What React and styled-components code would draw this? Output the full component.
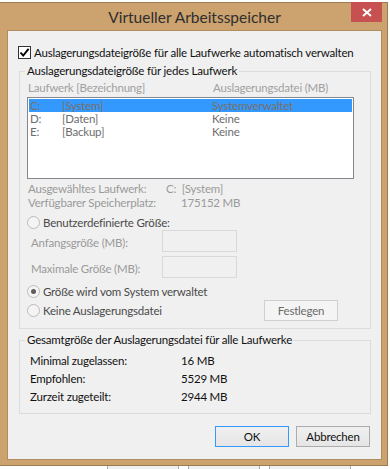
import styled, { createGlobalStyle } from "styled-components";

const GlobalStyle = createGlobalStyle`
  html, body {
    margin: 0;
    padding: 0;
    background: #ffffff;
  }
  body {
    font-family: Lato, "Liberation Sans", sans-serif;
    font-size: 11.5px;
    letter-spacing: -0.2px;
    color: #000;
  }
  * {
    box-sizing: border-box;
  }
`;

const drives = [
  { letter: "C:", name: "[System]", size: "Systemverwaltet", selected: true },
  { letter: "D:", name: "[Daten]", size: "Keine" },
  { letter: "E:", name: "[Backup]", size: "Keine" },
];

const totals = [
  { label: "Minimal zugelassen:", value: "16 MB" },
  { label: "Empfohlen:", value: "5529 MB" },
  { label: "Zurzeit zugeteilt:", value: "2944 MB" },
];

export default function App() {
  return (
    <>
      <GlobalStyle />
      <Desktop>
        <Window>
          <TitleBar>
            <span />
            <Title>Virtueller Arbeitsspeicher</Title>
            <CloseButton aria-label="Schließen">
              <svg width="10" height="9" viewBox="0 0 10 9">
                <path d="M1 1 L9 8 M9 1 L1 8" stroke="#fff" strokeWidth="2" fill="none" />
              </svg>
            </CloseButton>
          </TitleBar>

          <Client>
            <CheckRow>
              <CheckBox>
                <svg width="11" height="11" viewBox="0 0 11 11">
                  <path d="M1.5 5.5 L4.2 8.6 L9.6 1.8" stroke="#000" strokeWidth="1.9" fill="none" />
                </svg>
              </CheckBox>
              <span>Auslagerungsdateigröße für alle Laufwerke automatisch verwalten</span>
            </CheckRow>

            <Group $padBottom={7}>
              <Legend>Auslagerungsdateigröße für jedes Laufwerk</Legend>
              <ColumnHeads>
                <span>Laufwerk [Bezeichnung]</span>
                <span>Auslagerungsdatei (MB)</span>
              </ColumnHeads>
              <ListBox>
                {drives.map((d) => (
                  <ListRow key={d.letter} $selected={d.selected}>
                    <span>{d.letter}</span>
                    <span>{d.name}</span>
                    <span>{d.size}</span>
                  </ListRow>
                ))}
              </ListBox>

              <InfoRow $labelWidth={138} $top={3}>
                <span>Ausgewähltes Laufwerk:</span>
                <span>C:&nbsp;&nbsp;[System]</span>
              </InfoRow>
              <InfoRow $labelWidth={153}>
                <span>Verfügbarer Speicherplatz:</span>
                <span>175152 MB</span>
              </InfoRow>

              <RadioRow $top={5}>
                <Radio />
                <span>Benutzerdefinierte Größe:</span>
              </RadioRow>
              <SizeRow $top={1}>
                <SizeLabel>Anfangsgröße (MB):</SizeLabel>
                <SizeInput disabled />
              </SizeRow>
              <SizeRow $top={4}>
                <SizeLabel>Maximale Größe (MB):</SizeLabel>
                <SizeInput disabled />
              </SizeRow>
              <RadioRow $top={6}>
                <Radio $checked />
                <span>Größe wird vom System verwaltet</span>
              </RadioRow>
              <RadioRow $top={2} $height={21}>
                <Radio />
                <span>Keine Auslagerungsdatei</span>
                <PushButton $disabled $push>Festlegen</PushButton>
              </RadioRow>
            </Group>

            <Group $top={4} $padBottom={7}>
              <Legend>Gesamtgröße der Auslagerungsdatei für alle Laufwerke</Legend>
              <Totals>
                {totals.map((t) => (
                  <TotalRow key={t.label}>
                    <span>{t.label}</span>
                    <span>{t.value}</span>
                  </TotalRow>
                ))}
              </Totals>
            </Group>

            <ButtonRow>
              <PushButton $default>OK</PushButton>
              <PushButton>Abbrechen</PushButton>
            </ButtonRow>
          </Client>
        </Window>

        <ParentRow>
          <ParentButton $width={72}>OK</ParentButton>
          <ParentButton $width={72}>Abbrechen</ParentButton>
          <ParentButton $width={82}>Übernehmen</ParentButton>
        </ParentRow>
      </Desktop>
    </>
  );
}

const Desktop = styled.div`
  width: 390px;
  height: 469px;
  overflow: hidden;
  background: #ffffff;
  padding-top: 2px;
`;

const Window = styled.div`
  width: 388px;
  background: #cca26f;
  border: 1px solid #9c7b52;
  border-left: none;
  padding: 0 5px 5px 7px;
`;

const TitleBar = styled.div`
  display: grid;
  grid-template-columns: 1fr auto 1fr;
  height: 27px;
`;

const Title = styled.div`
  align-self: center;
  font-size: 15.5px;
  letter-spacing: 0;
  color: #2e2e2e;
  white-space: nowrap;
  padding-top: 1px;
`;

const CloseButton = styled.div`
  justify-self: end;
  align-self: start;
  margin-top: -1px;
  width: 31px;
  height: 20px;
  background: #c75050;
  display: flex;
  align-items: center;
  justify-content: center;
`;

const Client = styled.div`
  height: 430px;
  background: #f0f0f0;
  border: 1px solid #b08c5f;
  padding: 0 10px 0 11px;
  display: flex;
  flex-direction: column;
`;

const CheckRow = styled.div`
  display: flex;
  align-items: center;
  gap: 3px;
  height: 13px;
  margin: 15px 0 0 -1px;
  white-space: nowrap;
  color: #111;
`;

const CheckBox = styled.span`
  width: 13px;
  height: 13px;
  border: 1px solid #333333;
  background: #ffffff;
  display: flex;
  align-items: center;
  justify-content: center;
  flex: none;
`;

const Group = styled.fieldset`
  margin: ${(p) => p.$top || 5}px 0 0 0;
  padding: 3px 0 ${(p) => p.$padBottom}px 7px;
  border: 1px solid #dcdcdc;
  min-width: 0;
`;

const Legend = styled.legend`
  padding: 0 2px;
  margin-left: -2px;
  line-height: 14px;
  color: #111;
  white-space: nowrap;
`;

const ColumnHeads = styled.div`
  display: grid;
  grid-template-columns: 185px 1fr;
  height: 14px;
  line-height: 14px;
  padding-left: 1px;
  color: #a0a0a0;
  white-space: nowrap;
`;

const ListBox = styled.div`
  margin-top: 2px;
  width: 327px;
  height: 82px;
  border: 1px solid #828790;
  background: #ffffff;
  padding: 1px;
`;

const ListRow = styled.div`
  display: grid;
  grid-template-columns: 32px 150px 1fr;
  height: 13px;
  line-height: 13px;
  padding-left: 1px;
  white-space: nowrap;
  overflow: hidden;
  color: ${(p) => (p.$selected ? "#7a7066" : "#6d6d6d")};
  background: ${(p) => (p.$selected ? "#3399ff" : "transparent")};
`;

const InfoRow = styled.div`
  display: grid;
  grid-template-columns: ${(p) => p.$labelWidth}px 1fr;
  margin: ${(p) => p.$top || 0}px 0 0 1px;
  height: 14px;
  line-height: 14px;
  color: #9a9a9a;
  white-space: nowrap;
`;

const RadioRow = styled.div`
  display: flex;
  align-items: center;
  gap: 3px;
  margin-top: ${(p) => p.$top || 0}px;
  height: ${(p) => p.$height || 14}px;
  color: #4a4a4a;
  white-space: nowrap;
`;

const Radio = styled.span`
  width: 13px;
  height: 13px;
  border-radius: 50%;
  border: 1px solid #bcbcbc;
  background: #f4f4f4;
  display: flex;
  align-items: center;
  justify-content: center;
  flex: none;

  &::after {
    content: "";
    width: 5px;
    height: 5px;
    border-radius: 50%;
    background: ${(p) => (p.$checked ? "#5c5c5c" : "transparent")};
  }
`;

const SizeRow = styled.div`
  display: flex;
  align-items: center;
  margin-top: ${(p) => p.$top || 0}px;
  height: 22px;
  padding-left: 4px;
  color: #9a9a9a;
`;

const SizeLabel = styled.span`
  width: 131px;
  padding-top: 3px;
  white-space: nowrap;
`;

const SizeInput = styled.input`
  width: 75px;
  height: 22px;
  margin: 0;
  padding: 0;
  border: 1px solid #d9d9d9;
  background: #f0f0f0;
`;

const PushButton = styled.div`
  width: 74px;
  height: 21px;
  display: flex;
  align-items: center;
  justify-content: center;
  margin-left: ${(p) => (p.$push ? "auto" : "0")};
  margin-right: ${(p) => (p.$push ? "32px" : "0")};
  border: 1px solid
    ${(p) => (p.$default ? "#3399ff" : p.$disabled ? "#cfcfcf" : "#acacac")};
  background: ${(p) =>
    p.$disabled ? "#f4f4f4" : "linear-gradient(#f0f0f0, #e5e5e5)"};
  color: ${(p) => (p.$disabled ? "#6a6a6a" : "#111")};
  white-space: nowrap;
`;

const Totals = styled.div`
  padding: 2px 0 0 3px;
`;

const TotalRow = styled.div`
  display: grid;
  grid-template-columns: 151px 1fr;
  height: 18px;
  line-height: 18px;
  color: #111;
`;

const ButtonRow = styled.div`
  display: flex;
  justify-content: flex-end;
  gap: 7px;
  margin: 12px 1px 0 0;
`;

const ParentRow = styled.div`
  display: flex;
  padding-left: 107px;
  gap: 9px;
`;

const ParentButton = styled.div`
  width: ${(p) => p.$width}px;
  height: 20px;
  border: 1px solid #acacac;
  border-top: none;
  background: #f0f0f0;
  text-align: center;
  line-height: 14px;
  padding-top: 2px;
`;
